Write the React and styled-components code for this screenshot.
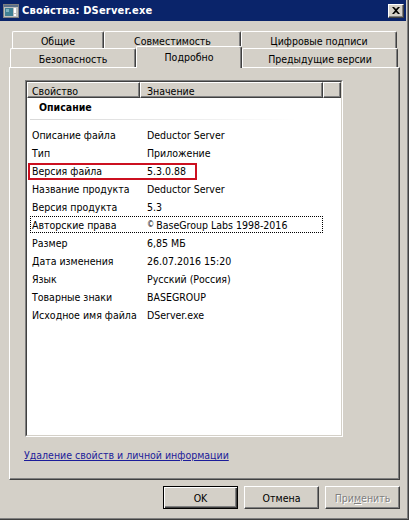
import React from 'react';
import styled, { createGlobalStyle } from 'styled-components';

const GlobalStyle = createGlobalStyle`
  html, body {
    margin: 0;
    padding: 0;
    background: #d4d0c8;
  }
  body {
    font-family: "DejaVu Sans Condensed", "Liberation Sans", Arial, sans-serif;
    font-size: 10.5px;
    color: #000;
  }
  * {
    box-sizing: border-box;
  }
`;

const Window = styled.div`
  width: 409px;
  height: 520px;
  background: #d4d0c8;
  border-right: 1px solid #404040;
  border-bottom: 1px solid #404040;
  box-shadow: inset -1px -1px 0 #808080;
  display: flex;
  flex-direction: column;
  overflow: hidden;
`;

const TitleBar = styled.div`
  height: 21px;
  margin-right: 2px;
  background: #0a246a;
  color: #fff;
  font-size: 11px;
  font-weight: bold;
  display: flex;
  align-items: center;
  padding: 0 2px 0 3px;
  gap: 3px;
`;

const TitleText = styled.span`
  flex: 1;
  white-space: nowrap;
  letter-spacing: 0.2px;
`;

const CloseButton = styled.div`
  width: 16px;
  height: 14px;
  background: #d4d0c8;
  border: 1px solid;
  border-color: #fff #404040 #404040 #fff;
  box-shadow: inset -1px -1px 0 #808080;
  display: flex;
  align-items: center;
  justify-content: center;
`;

const Body = styled.div`
  flex: 1;
  display: flex;
  flex-direction: column;
  padding: 10px 8px 0 9px;
`;

const TabRow = styled.div`
  display: flex;
  align-items: flex-end;
  height: ${({ $h }) => $h}px;
  padding-left: ${({ $indent }) => $indent}px;
`;

const Tab = styled.div`
  position: relative;
  width: ${({ $w }) => $w}px;
  height: ${({ $active, $h }) => ($active ? $h + 3 : $h)}px;
  margin-bottom: ${({ $active }) => ($active ? -1 : 0)}px;
  z-index: ${({ $active }) => ($active ? 2 : 1)};
  background: #d4d0c8;
  border-top: 1px solid #fff;
  border-left: 1px solid #fff;
  border-right: 1px solid #404040;
  border-top-left-radius: 2px;
  border-top-right-radius: 2px;
  box-shadow: inset -1px 0 0 #808080;
  display: flex;
  justify-content: center;
  padding-top: ${({ $top }) => $top}px;
  white-space: nowrap;
`;

const Panel = styled.div`
  height: 413px;
  border: 1px solid;
  border-color: #fff #404040 #404040 #fff;
  box-shadow: inset -1px -1px 0 #808080;
  padding: 12px 0 0 15px;
  display: flex;
  flex-direction: column;
`;

const ListOuter = styled.div`
  width: 318px;
  height: 357px;
  border: 1px solid;
  border-color: #808080 #fff #fff #808080;
`;

const ListInner = styled.div`
  height: 100%;
  background: #fff;
  border: 1px solid;
  border-color: #404040 #d4d0c8 #d4d0c8 #404040;
  display: flex;
  flex-direction: column;
`;

const Header = styled.div`
  display: grid;
  grid-template-columns: 113px 183px 1fr;
  height: 16px;
`;

const HeaderCell = styled.div`
  background: #d4d0c8;
  border-top: 1px solid #fff;
  border-left: 1px solid #fff;
  border-right: 1px solid #404040;
  border-bottom: 1px solid #404040;
  box-shadow: inset -1px -1px 0 #808080;
  padding-left: ${({ $pad }) => $pad}px;
  line-height: 16px;
  white-space: nowrap;
  overflow: hidden;
`;

const GroupTitle = styled.div`
  height: 18px;
  line-height: 18px;
  padding-left: 12px;
  font-weight: bold;
`;

const Separator = styled.div`
  width: 267px;
  height: 1px;
  margin: 3px 0 6px 3px;
  background: linear-gradient(to right, #d8d8d8, #ececec 60%, #ffffff);
`;

const Row = styled.div`
  position: relative;
  display: grid;
  grid-template-columns: 113px 183px;
  width: 296px;
  height: 18px;
  line-height: 18px;
  white-space: nowrap;

  &::before {
    content: '';
    display: ${({ $focused }) => ($focused ? 'block' : 'none')};
    position: absolute;
    left: 3px;
    right: 0;
    top: 0;
    bottom: 1px;
    border: 1px dotted #000;
  }

  &::after {
    content: '';
    display: ${({ $marked }) => ($marked ? 'block' : 'none')};
    position: absolute;
    left: 1px;
    width: 165px;
    top: 1px;
    bottom: 0;
    border: 2px solid #cc1020;
  }
`;

const Cell = styled.span`
  padding-left: ${({ $pad }) => $pad}px;
  overflow: hidden;
`;

const Copy = styled.span`
  font-size: 8px;
  vertical-align: 2px;
  margin-right: 2px;
`;

const Link = styled.a`
  margin: 12px 0 0 -1px;
  color: #1c1c9a;
  text-decoration: underline;
  line-height: 13px;
  cursor: pointer;
  align-self: flex-start;
`;

const ButtonRow = styled.div`
  display: flex;
  justify-content: flex-end;
  gap: 6px;
  margin-top: 6px;
`;

const Button = styled.div`
  width: 75px;
  height: 23px;
  background: #d4d0c8;
  display: flex;
  align-items: center;
  justify-content: center;
  border: 1px solid;
  border-color: ${({ $default }) => ($default ? '#000' : '#fff #404040 #404040 #fff')};
  box-shadow: ${({ $default }) =>
    $default
      ? 'inset 1px 1px 0 #fff, inset -1px -1px 0 #404040, inset -2px -2px 0 #808080'
      : 'inset -1px -1px 0 #808080'};
  color: ${({ $disabled }) => ($disabled ? '#808080' : '#000')};
  text-shadow: ${({ $disabled }) => ($disabled ? '1px 1px 0 #fff' : 'none')};
`;

const AppIcon = () => (
  <svg width="16" height="16" viewBox="0 0 16 16">
    <rect x="0.5" y="1.5" width="15" height="13" fill="#c0c0c0" stroke="#808080" />
    <rect x="1" y="2" width="14" height="2" fill="#5a6f8a" />
    <rect x="2" y="5" width="8" height="8" fill="#3f7f94" />
    <rect x="3" y="6" width="3" height="3" fill="#7fb0c0" />
    <rect x="11" y="5" width="2" height="5" fill="#fff" />
    <rect x="11" y="11" width="2" height="2" fill="#fff" />
  </svg>
);

const CloseGlyph = () => (
  <svg width="8" height="7" viewBox="0 0 8 7">
    <path d="M0 0h2l2 2 2-2h2L5 3.5 8 7H6L4 5 2 7H0l3-3.5z" fill="#000" />
  </svg>
);

const rows = [
  ['Описание файла', 'Deductor Server'],
  ['Тип', 'Приложение'],
  ['Версия файла', '5.3.0.88', 'marked'],
  ['Название продукта', 'Deductor Server'],
  ['Версия продукта', '5.3'],
  ['Авторские права', 'BaseGroup Labs 1998-2016', 'focused'],
  ['Размер', '6,85 МБ'],
  ['Дата изменения', '26.07.2016 15:20'],
  ['Язык', 'Русский (Россия)'],
  ['Товарные знаки', 'BASEGROUP'],
  ['Исходное имя файла', 'DServer.exe'],
];

function App() {
  return (
    <>
      <GlobalStyle />
      <Window>
        <TitleBar>
          <AppIcon />
          <TitleText>Свойства: DServer.exe</TitleText>
          <CloseButton>
            <CloseGlyph />
          </CloseButton>
        </TitleBar>

        <Body>
          <TabRow $h={17} $indent={3}>
            <Tab $w={92} $h={17} $top={3}>Общие</Tab>
            <Tab $w={137} $h={17} $top={3}>Совместимость</Tab>
            <Tab $w={156} $h={17} $top={3}>Цифровые подписи</Tab>
          </TabRow>
          <TabRow $h={19} $indent={1}>
            <Tab $w={126} $h={19} $top={4}>Безопасность</Tab>
            <Tab $w={106} $h={19} $top={4} $active>Подробно</Tab>
            <Tab $w={156} $h={19} $top={4}>Предыдущие версии</Tab>
          </TabRow>

          <Panel>
            <ListOuter>
              <ListInner>
                <Header>
                  <HeaderCell $pad={4}>Свойство</HeaderCell>
                  <HeaderCell $pad={6}>Значение</HeaderCell>
                  <HeaderCell $pad={0} />
                </Header>
                <GroupTitle>Описание</GroupTitle>
                <Separator />
                {rows.map(([name, value, mark]) => (
                  <Row key={name} $marked={mark === 'marked'} $focused={mark === 'focused'}>
                    <Cell $pad={5}>{name}</Cell>
                    <Cell $pad={7}>
                      {mark === 'focused' && <Copy>©</Copy>}
                      {value}
                    </Cell>
                  </Row>
                ))}
              </ListInner>
            </ListOuter>
            <Link>Удаление свойств и личной информации</Link>
          </Panel>

          <ButtonRow>
            <Button $default>OK</Button>
            <Button>Отмена</Button>
            <Button $disabled>
              <span>
                При<u>м</u>енить
              </span>
            </Button>
          </ButtonRow>
        </Body>
      </Window>
    </>
  );
}

export default App;
